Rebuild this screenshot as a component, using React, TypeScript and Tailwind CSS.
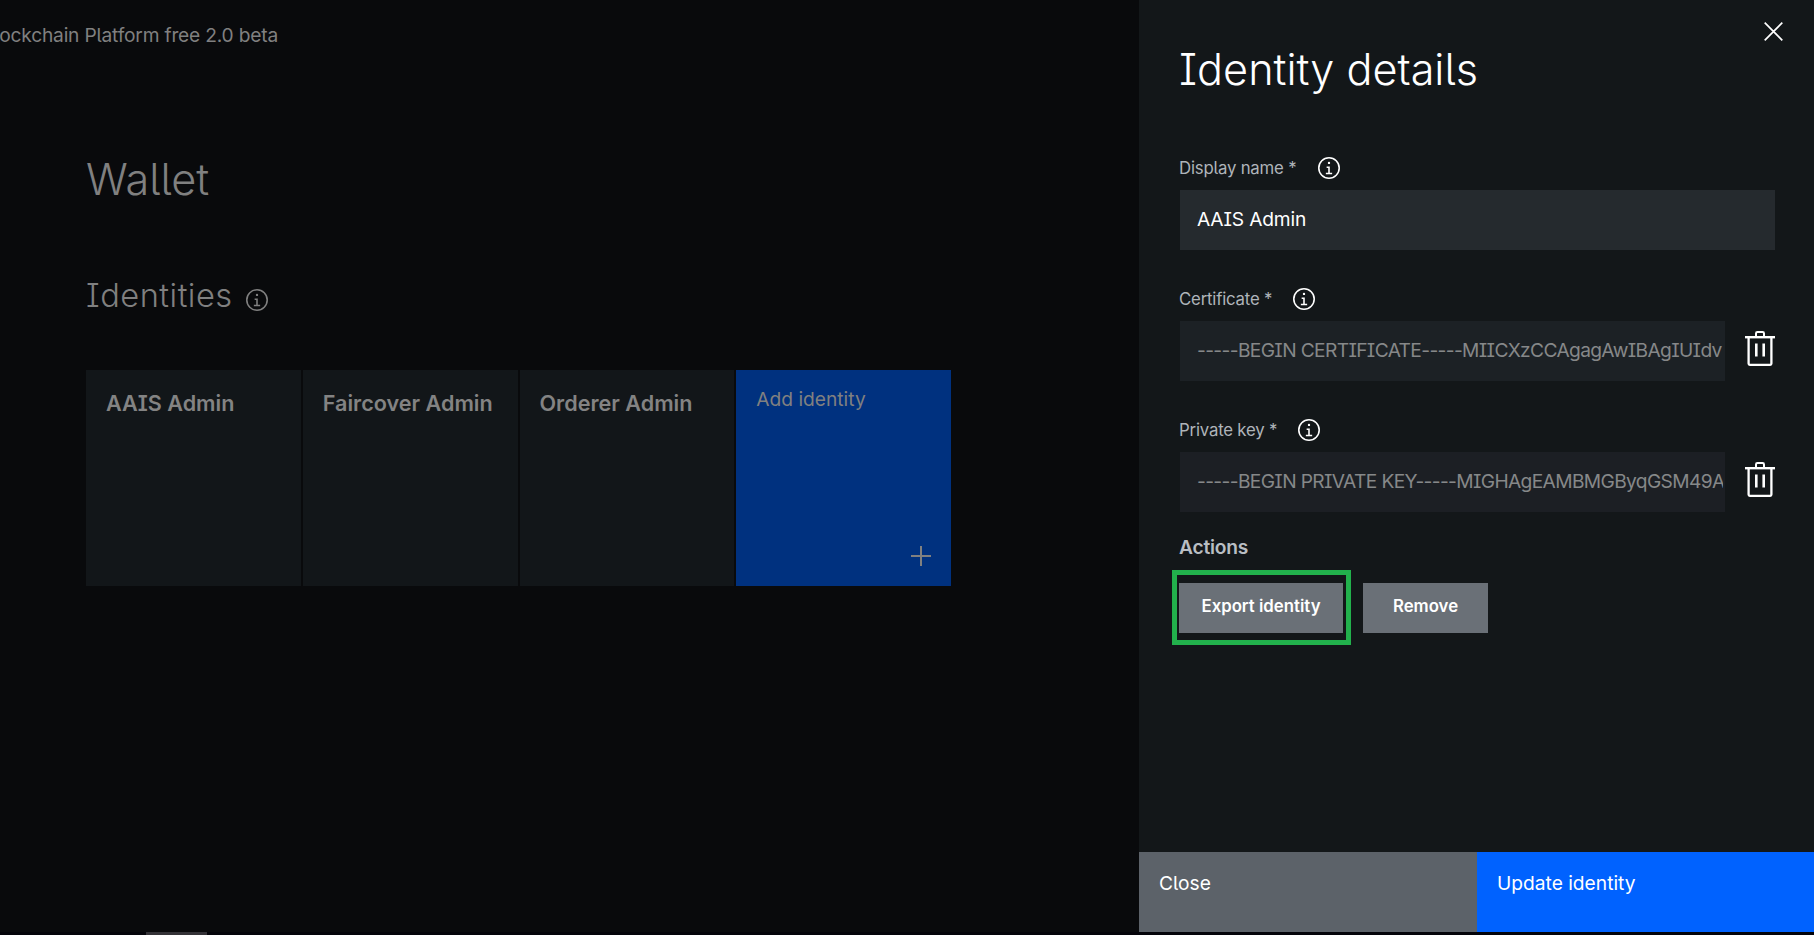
import { clsx } from "clsx";

const fontStack = "font-['Inter','Liberation_Sans',sans-serif] [font-feature-settings:'cv08','cv05']";

function InfoIcon({ className }: { className?: string }) {
  return (
    <svg viewBox="2 2 28 28" className={clsx("size-[22px] shrink-0", className)} fill="currentColor" aria-hidden="true">
      <path d="M17 22v-8h-4v2h2v6h-3v2h8v-2zM16 8a1.5 1.5 0 1 0 1.5 1.5A1.5 1.5 0 0 0 16 8z" />
      <path d="M16 30a14 14 0 1 1 14-14 14 14 0 0 1-14 14zm0-26a12 12 0 1 0 12 12A12 12 0 0 0 16 4z" />
    </svg>
  );
}

function TrashIcon() {
  return (
    <svg viewBox="0 0 30 35" className="h-[35px] w-[30px]" fill="none" stroke="#fff" strokeWidth="2" aria-hidden="true">
      <path d="M0 6.2h30" strokeWidth="2.4" />
      <path d="M11 6V2.4Q11 1 12.4 1h5.2Q19 1 19 2.4V6" />
      <path d="M3.6 7v25.6q0 1.2 1.2 1.2h20.4q1.2 0 1.2-1.2V7" strokeWidth="2.3" />
      <path d="M11.3 12.5v13M18.7 12.5v13" strokeWidth="2.6" />
    </svg>
  );
}

function IdentityCard({ name }: { name: string }) {
  return (
    <div className="h-[216px] bg-[#121619] pt-[21px] pl-5">
      <div className="text-[21.6px] leading-6 font-semibold whitespace-nowrap text-[#838383]">{name}</div>
    </div>
  );
}

interface FieldProps {
  label: string;
  gap: string;
  value: string;
  valueClass: string;
  removable?: boolean;
}

function Field({ label, gap, value, valueClass, removable }: FieldProps) {
  return (
    <div>
      <div className={clsx("flex h-6 items-center", gap)}>
        <span className="pt-0.5 text-[16.8px] tracking-[-0.2px] text-[#afb4b9]">{label}</span>
        <InfoIcon className="text-white" />
      </div>
      <div className="mt-2.5 ml-px flex items-center">
        <div className={clsx("h-[60px] min-w-0 flex-1 pr-0.5 pl-[17px]", valueClass)}>
          <div className="overflow-hidden text-[19.2px] leading-[58px] whitespace-nowrap">{value}</div>
        </div>
        {removable && (
          <button className="mt-[-5px] ml-5">
            <TrashIcon />
          </button>
        )}
      </div>
    </div>
  );
}

export default function App() {
  return (
    <div className={clsx("flex h-[935px] w-[1814px] flex-col overflow-hidden bg-[#04040a]", fontStack)}>
      <div className="flex h-[932px]">
        <main className="w-[1139px] bg-[#090a0c] text-[#808080]">
          <header className="flex w-[278px] justify-end overflow-hidden pt-[23px]">
            <span className="shrink-0 text-[19.2px] leading-6 tracking-[-0.2px] whitespace-nowrap">
              IBM Blockchain Platform free 2.0 beta
            </span>
          </header>
          <div className="pl-[86px]">
            <h1 className="mt-[104px] text-[43.2px] leading-[56px] font-light">Wallet</h1>
            <div className="mt-[68px] flex h-10 items-center">
              <h2 className="w-40 text-[32.6px] leading-10 font-light tracking-[0.5px]">Identities</h2>
              <InfoIcon className="mt-[10px]" />
            </div>
            <div className="mt-[55px] grid w-[865px] grid-cols-4 gap-0.5">
              <IdentityCard name="AAIS Admin" />
              <IdentityCard name="Faircover Admin" />
              <IdentityCard name="Orderer Admin" />
              <div className="flex h-[216px] flex-col justify-between bg-[#00317f] pt-[17px] pr-5 pb-5 pl-5">
                <span className="text-[19.2px] leading-6">Add identity</span>
                <svg viewBox="0 0 20 20" className="size-5 self-end" stroke="currentColor" strokeWidth="2" aria-hidden="true">
                  <path d="M10 0v20M0 10h20" />
                </svg>
              </div>
            </div>
          </div>
        </main>

        <aside className="relative flex w-[675px] flex-col bg-[#131719] text-white">
          <button className="absolute top-[22px] right-[31px]">
            <svg viewBox="0 0 19 19" className="size-[19px]" stroke="currentColor" strokeWidth="1.7" aria-hidden="true">
              <path d="M.7.7l17.6 17.6M18.3.7L.7 18.3" />
            </svg>
          </button>
          <div className="pt-[41px] pr-[39px] pl-10">
            <h2 className="text-[43.2px] leading-[56px] font-light">Identity details</h2>
            <div className="mt-[59px] flex flex-col gap-[37px]">
              <Field label="Display name *" gap="gap-[22px]" value="AAIS Admin" valueClass="bg-[#252a2e] tracking-[-0.15px]" />
              <Field
                label="Certificate *"
                gap="gap-[21px]"
                value="-----BEGIN CERTIFICATE-----MIICXzCCAgagAwIBAgIUIdv"
                valueClass="bg-[#1c2125] text-[#868889] tracking-[-0.65px]"
                removable
              />
              <Field
                label="Private key *"
                gap="gap-[21px]"
                value="-----BEGIN PRIVATE KEY-----MIGHAgEAMBMGByqGSM49AgEG"
                valueClass="bg-[#1c1f24] text-[#868889] tracking-[-0.65px]"
                removable
              />
            </div>
            <h3 className="mt-[23px] text-[19.2px] leading-6 font-semibold tracking-[-0.2px] text-[#b9bec3]">Actions</h3>
            <div className="mt-6 flex gap-5">
              <button className="relative h-[50px] w-[164px] bg-[#6a7077] pb-0.5 text-[16.8px] font-semibold whitespace-nowrap">
                Export identity
                <span className="absolute -top-[13px] -left-[7px] h-[75px] w-[179px] border-5 border-[#22b14c]" />
              </button>
              <button className="h-[50px] w-[125px] bg-[#6a7077] pb-0.5 text-[16.8px] font-semibold">Remove</button>
            </div>
          </div>
          <footer className="mt-auto flex h-20 text-[19.2px] leading-6">
            <button className="flex w-[338px] items-start bg-[#5c6269] pt-[19px] pl-5">Close</button>
            <button className="flex flex-1 items-start bg-[#0062ff] pt-[19px] pl-5">Update identity</button>
          </footer>
        </aside>
      </div>
      <div className="h-[3px] pl-[146px]">
        <div className="h-full w-[61px] bg-[#343237]" />
      </div>
    </div>
  );
}
